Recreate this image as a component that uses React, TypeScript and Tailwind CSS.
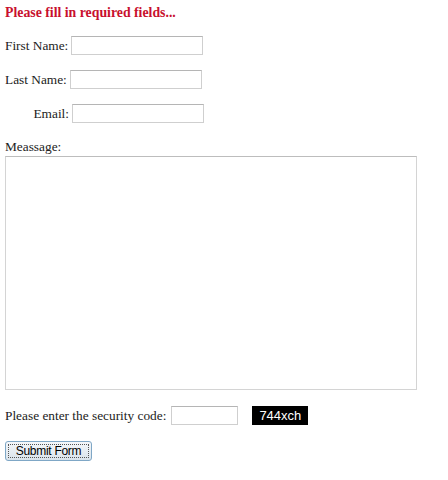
const inputCls =
  "h-[19px] w-[132px] border border-[#cfcfcf] border-t-[#b5b5b5] bg-white outline-none"

export default function App() {
  return (
    <div className="min-h-[480px] w-[448px] bg-white pl-[5px] pt-[5px] text-[13.33px] text-[#222] [font-family:'Liberation_Serif',serif]">
      <div className="h-[16px] leading-[16px] text-[13.8px] font-bold text-[#c8102e]">Please fill in required fields...</div>

      <div className="mt-[15px] flex h-[19px] items-center">
        <span>First Name:</span>
        <input className={`${inputCls} ml-[3px]`} />
      </div>

      <div className="mt-[15px] flex h-[19px] items-center">
        <span>Last Name:</span>
        <input className={`${inputCls} ml-[3px]`} />
      </div>

      <div className="mt-[15px] flex h-[19px] items-center">
        <span className="w-[64px] text-right">Email:</span>
        <input className={`${inputCls} ml-[3px]`} />
      </div>

      <div className="mt-[16px] h-[16px] leading-[16px]">Meassage:</div>
      <textarea className="mt-[1px] block h-[234px] w-[412px] resize-none border border-[#d4d4d4] border-t-[#bdbdbd] bg-white outline-none" />

      <div className="mt-[16px] flex h-[19px] items-center">
        <span>Please enter the security code:</span>
        <input className="ml-[5px] h-[19px] w-[67px] border border-[#cfcfcf] border-t-[#b5b5b5] bg-white outline-none" />
        <span className="ml-[14px] flex h-[19px] w-[56px] items-center justify-center bg-black text-[13px] text-white [font-family:'Liberation_Sans',sans-serif]">
          744xch
        </span>
      </div>

      <button className="mt-[16px] flex h-[20px] w-[87px] items-center justify-center rounded-[3px] border border-[#7fa7c6] bg-gradient-to-b from-[#f4f7fa] to-[#d9e3eb] p-[2px] text-[12px] text-black [font-family:'Liberation_Sans',sans-serif]">
        <span className="flex h-full w-full items-center justify-center border border-dotted border-[#555] leading-none tracking-[-0.3px]">
          Submit Form
        </span>
      </button>
    </div>
  )
}
